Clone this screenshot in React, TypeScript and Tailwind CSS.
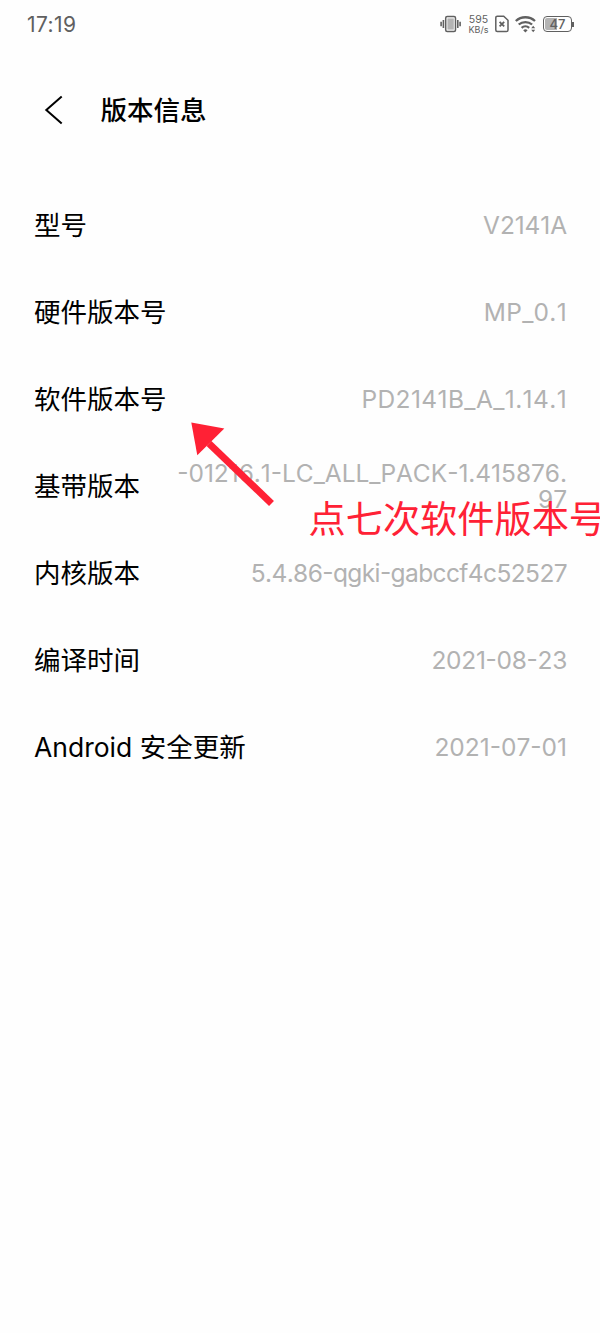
const rows = [
  { label: '型号', value: 'V2141A', spacing: 'tracking-[-0.1px]' },
  { label: '硬件版本号', value: 'MP_0.1', spacing: 'tracking-[0.3px]' },
  { label: '软件版本号', value: 'PD2141B_A_1.14.1', spacing: 'tracking-[0.4px]' },
  { label: '基带版本', value: '-01216.1-LC_ALL_PACK-1.415876.\n97', spacing: 'tracking-[-0.04px]' },
  { label: '内核版本', value: '5.4.86-qgki-gabccf4c52527', spacing: 'tracking-[-0.6px]' },
  { label: '编译时间', value: '2021-08-23', spacing: 'tracking-[-0.3px]' },
  { label: 'Android 安全更新', value: '2021-07-01', spacing: 'tracking-normal' },
];

function StatusBar() {
  return (
    <div className="flex h-12 items-center justify-between pl-[27px] pr-[26px] text-[#606060]">
      <span className="text-[21px] leading-none tracking-[0.4px]">17:19</span>
      <div className="flex items-center">
        <svg width="22" height="18" viewBox="0 0 22 18" fill="none" stroke="currentColor">
          <rect x="5.7" y="1.5" width="9.8" height="15" rx="1.5" strokeWidth="1.5" />
          <rect x="7.4" y="3.4" width="6.4" height="11.2" fill="#b4b4b4" stroke="none" />
          <path d="M3.4 5v8M17.8 5v8M1.1 6.8v4.4M20.1 6.8v4.4" strokeWidth="1.6" />
        </svg>
        <div className="ml-[6px] flex w-[21px] flex-col items-center">
          <span className="text-[10.5px] leading-[10px]">595</span>
          <span className="text-[9px] leading-[9px]">KB/s</span>
        </div>
        <svg className="ml-[6px]" width="14" height="18" viewBox="0 0 14 18" fill="none" stroke="currentColor" strokeWidth="1.5">
          <path d="M2.3 1.2h6.4L13 5.3v9.6a1.6 1.6 0 0 1-1.6 1.6H2.3A1.5 1.5 0 0 1 .8 15V2.7a1.5 1.5 0 0 1 1.5-1.5z" />
          <path d="M4.6 6.8l4.6 4.6M9.2 6.8l-4.6 4.6" strokeWidth="1.8" />
        </svg>
        <svg className="ml-[6px]" width="22" height="18" viewBox="0 0 22 18" fill="none" stroke="currentColor" strokeWidth="2.3">
          <path d="M.8 6c5.4-5 13.8-5 19.2 0M3.7 9.5c3.8-3.3 9.6-3.3 13.4 0M6.6 12.8c2.2-1.9 5.4-1.9 7.6 0" />
          <path d="M8.2 15.2a3.2 3.2 0 0 1 4.4 0l-2.2 2.4z" fill="currentColor" stroke="none" />
          <path d="M16.2 13.3l2-2.5 2 2.5zM16.2 14.8l2 2.5 2-2.5z" fill="currentColor" stroke="none" />
        </svg>
        <div className="ml-[6px] flex items-center">
          <div className="relative flex h-4 w-[29px] items-center justify-center rounded-[4px] border-[1.5px] border-[#606060]">
            <div className="absolute inset-y-[1px] left-[1px] w-[12px] rounded-l-[2px] bg-[#b4b4b4]" />
            <span className="relative text-[13px] font-medium leading-none">47</span>
          </div>
          <div className="h-[5px] w-[2px] bg-[#606060]" />
        </div>
      </div>
    </div>
  );
}

export default function App() {
  return (
    <div className="relative h-[1333px] w-[600px] overflow-hidden bg-[#fefefe] font-['Inter','Noto_Sans_CJK_SC',sans-serif]">
      <StatusBar />

      <header className="flex h-[124px] items-center pl-[44px]">
        <svg width="20" height="30" viewBox="0 0 20 30" fill="none" stroke="#000" strokeWidth="2">
          <path d="M17.7 1.5L2.3 15l15.4 13.5" />
        </svg>
        <h1 className="ml-[36.5px] pt-[2px] text-[26.5px] font-medium text-black">版本信息</h1>
      </header>

      <main className="mt-[10px] pl-[34px] pr-[33px]">
        {rows.map((row) => (
          <div key={row.label} className="flex h-[87px] items-center justify-between">
            <span className="whitespace-nowrap pt-px text-[26.5px] text-black">{row.label}</span>
            <span
              className={`whitespace-pre pb-[2px] text-right text-[24.5px] font-normal leading-[26px] text-[#b2b2b2] [font-feature-settings:'case','calt'_0] [font-kerning:none] ${row.spacing}`}
            >
              {row.value}
            </span>
          </div>
        ))}
      </main>

      {/* hint drawn over the list */}
      <svg className="absolute left-[190px] top-[420px]" width="90" height="90" viewBox="0 0 90 90" fill="#ff2135">
        <path d="M1.3 2.5L34.3 8.4 7.3 35.3z" />
        <path d="M19 23.5L81.5 83.5" stroke="#ff2135" strokeWidth="7" />
      </svg>
      <p className="absolute left-[308.5px] top-[493px] whitespace-nowrap text-[37.2px] leading-[54px] text-[#ff2135]">
        点七次软件版本号
      </p>
    </div>
  );
}
